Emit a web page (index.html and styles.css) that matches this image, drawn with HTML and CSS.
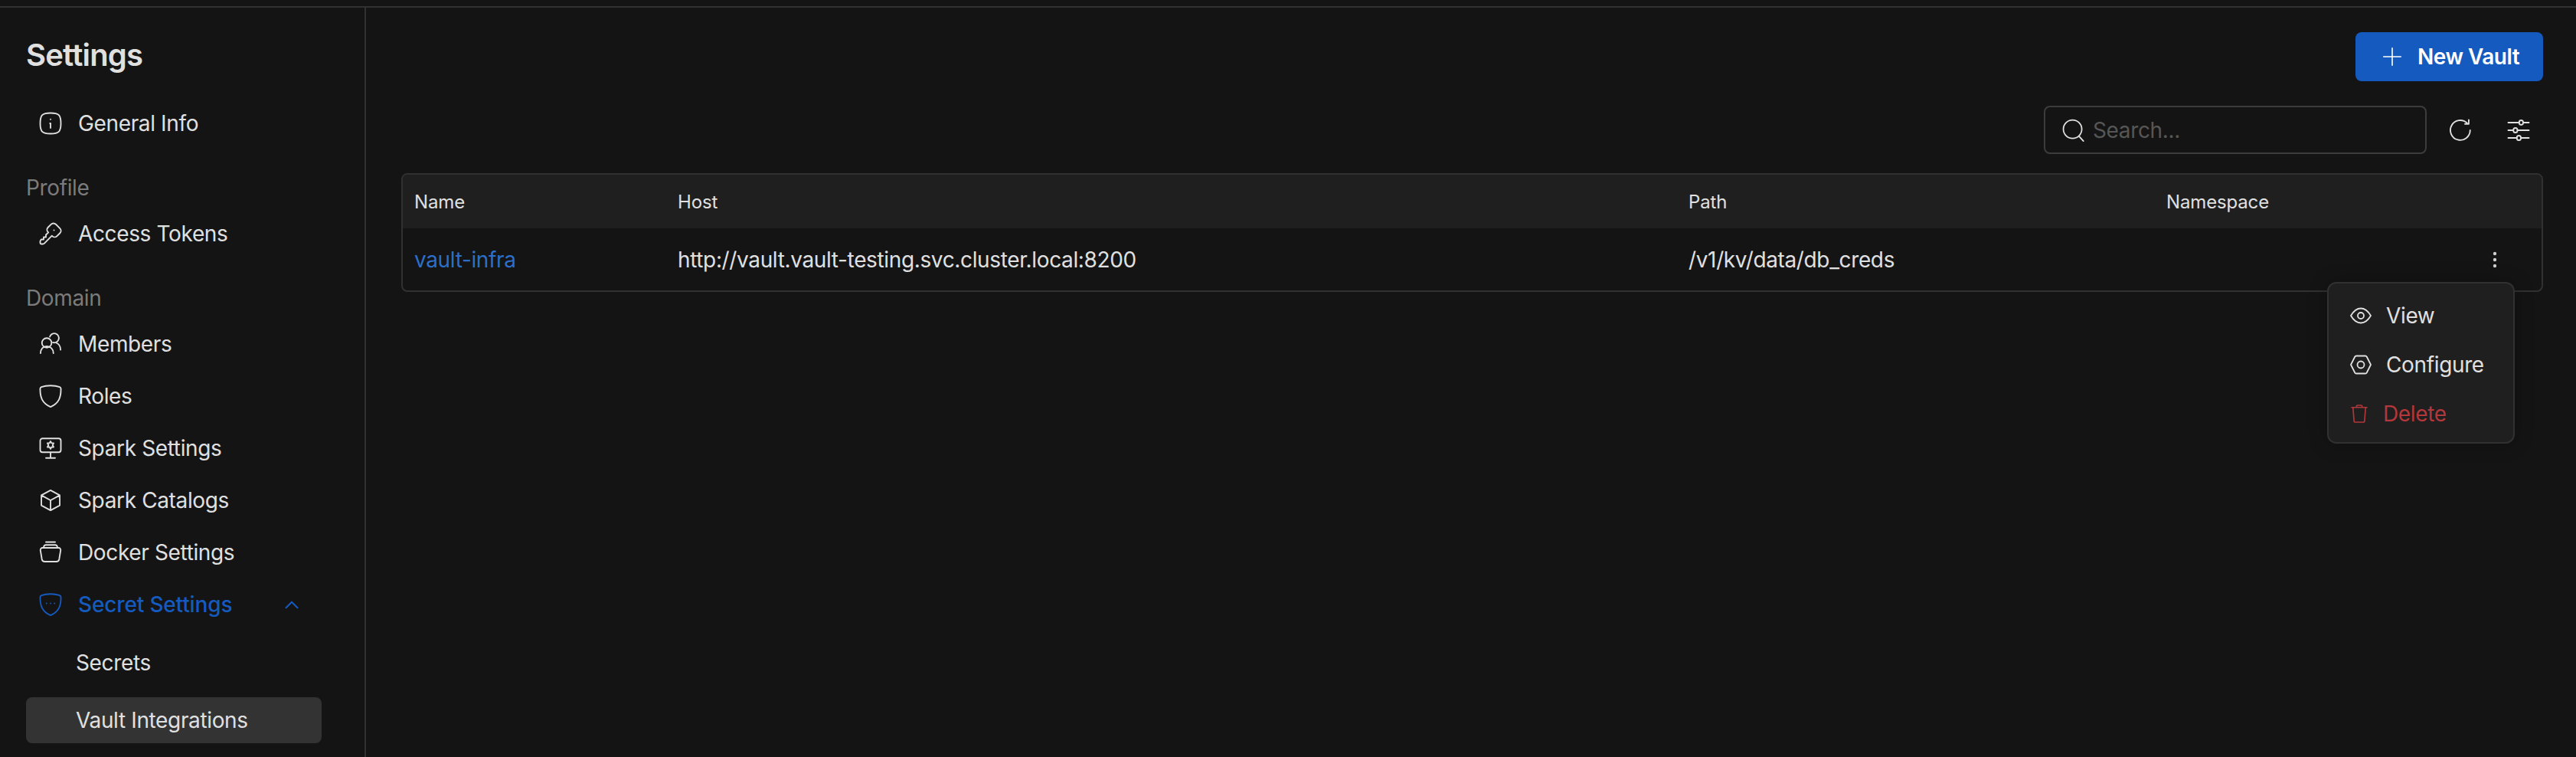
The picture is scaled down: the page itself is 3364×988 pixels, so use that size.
FILE: index.html
```html
<!DOCTYPE html>
<html lang="en">
<head>
    <meta charset="UTF-8">
    <title>Vault Integrations</title>
    <link rel="stylesheet" href="styles.css">
</head>
<body>
<div class="topbar"></div>
<div class="layout">
    <aside class="sidebar">
        <h1 class="title">Settings</h1>

        <a class="nav-item first">
            <svg class="icon" viewBox="0 0 24 24"><path d="M12 8.5h.01M11.500 12h.5v4M12 3c7.2 0 9 1.800 9 9s-1.800 9-9 9-9-1.800-9-9 1.800-9 9-9z"/></svg>
            General Info
        </a>

        <div class="nav-label">Profile</div>
        <a class="nav-item">
            <svg class="icon" viewBox="0 0 24 24"><path d="M16.600 3.800l3.600 3.600a2.900 2.900 0 0 1 0 4.100l-2.600 2.600a2.900 2.900 0 0 1-4.100 0l-.3-.3-6.600 6.600a2 2 0 0 1-1.400.6H4a1 1 0 0 1-1-1v-1.200a2 2 0 0 1 .6-1.400l.4-.4h2v-2h2v-2l2.100-2.100-.3-.3a2.900 2.900 0 0 1 0-4.100l2.600-2.600a2.900 2.900 0 0 1 4.200 0zM15 9h.01"/></svg>
            Access Tokens
        </a>

        <div class="nav-label">Domain</div>
        <a class="nav-item">
            <svg class="icon" viewBox="0 0 24 24"><circle cx="8.700" cy="11" r="4.200"/><path d="M3.300 20c0-3.700 2.300-6 5.400-6s5.800 2.300 5.800 6"/><path d="M11.400 5.700a4 4 0 1 1 2.600 4.900M17 11c2.300.9 3.700 3 3.700 6"/></svg>
            Members
        </a>
        <a class="nav-item">
            <svg class="icon" viewBox="0 0 24 24"><path d="M12 2.800c3 0 5.800.4 8 1.300.7.300 1 .8 1 1.500.2 7-1.500 12.500-9 15.800C4.500 18.100 2.800 12.600 3 5.600c0-.7.300-1.200 1-1.500 2.200-.9 5-1.300 8-1.300z"/></svg>
            Roles
        </a>
        <a class="nav-item">
            <svg class="icon" viewBox="0 0 24 24"><path d="M5 3.500h14a2 2 0 0 1 2 2v8a2 2 0 0 1-2 2H5a2 2 0 0 1-2-2v-8a2 2 0 0 1 2-2zM12 15.500v5M8 20.500h8"/><path d="M12 6l.9 1.600h1.800l-.9 1.700.9 1.700h-1.800l-.9 1.600-.9-1.600H9.300l.9-1.700-.9-1.700h1.800z"/></svg>
            Spark Settings
        </a>
        <a class="nav-item">
            <svg class="icon" viewBox="0 0 24 24"><path d="M12 3.300l8 4.300v8.800l-8 4.300-8-4.300V7.600zM12 12l8-4.400M12 12v8.700M12 12L4 7.600"/></svg>
            Spark Catalogs
        </a>
        <a class="nav-item">
            <svg class="icon" viewBox="0 0 24 24"><path d="M8 3h8M6 8c0-1.500.5-2.500 2-2.500h8c1.500 0 2 1 2 2.500"/><path d="M5 8h14c1.200 0 2 1 1.800 2.200l-1.300 7.800a2.500 2.500 0 0 1-2.500 2H7a2.500 2.500 0 0 1-2.500-2L3.200 10.200C3 9 3.800 8 5 8z"/></svg>
            Docker Settings
        </a>
        <a class="nav-item active">
            <svg class="icon" viewBox="0 0 24 24"><path d="M12 2.800c3 0 5.800.4 8 1.300.7.300 1 .8 1 1.500.2 7-1.500 12.500-9 15.800C4.500 18.100 2.800 12.600 3 5.600c0-.7.300-1.200 1-1.500 2.200-.9 5-1.300 8-1.300zM8.500 11h.01M12 11h.01M15.500 11h.01"/></svg>
            Secret Settings
            <svg class="chevron" viewBox="0 0 24 24"><path d="M3 17l9-9 9 9"/></svg>
        </a>
        <a class="sub-item first-sub">Secrets</a>
        <a class="sub-item selected">Vault Integrations</a>
    </aside>

    <main class="content">
        <div class="header">
            <button class="button" type="button">
                <svg class="icon" viewBox="0 0 24 24"><path d="M12 3v18M3 12h18"/></svg>
                New Vault
            </button>
        </div>

        <div class="toolbar">
            <div class="search">
                <svg class="icon" viewBox="0 0 24 24"><circle cx="11" cy="11" r="8.500"/><path d="M17 17.500l4 4.500"/></svg>
                <span class="placeholder">Search...</span>
            </div>
            <svg class="icon tool-refresh" viewBox="0 0 24 24"><path d="M20.500 12A8.600 8.600 0 1 1 17.800 5.700M19.300 3v3.500H16"/></svg>
            <svg class="icon tool-filter" viewBox="0 0 24 24"><path d="M3 5.300h9.500M16 5.300h5M3 12h4.500M11 12h10M3 18.700h7.500M14 18.700h7"/><rect x="12.500" y="3.300" width="3.500" height="4" rx="1.750"/><rect x="7.500" y="10" width="3.500" height="4" rx="1.750"/><rect x="10.500" y="16.700" width="3.500" height="4" rx="1.750"/></svg>
        </div>

        <div class="table">
            <div class="row head">
                <div>Name</div>
                <div>Host</div>
                <div>Path</div>
                <div>Namespace</div>
                <div></div>
            </div>
            <div class="row body">
                <div class="link">vault-infra</div>
                <div>http://vault.vault-testing.svc.cluster.local:8200</div>
                <div>/v1/kv/data/db_creds</div>
                <div></div>
                <div class="actions">
                    <svg class="kebab" viewBox="0 0 6 22"><circle cx="3" cy="3" r="2.200"/><circle cx="3" cy="11" r="2.200"/><circle cx="3" cy="19" r="2.200"/></svg>
                </div>
            </div>
        </div>

        <div class="menu">
            <div class="menu-item">
                <svg class="menu-icon" viewBox="0 0 28 28"><circle cx="14" cy="14" r="4"/><path d="M1 14C4.500 8 9 4.500 14 4.500S23.500 8 27 14c-3.500 6-8 9.500-13 9.500S4.500 20 1 14z"/></svg>
                View
            </div>
            <div class="menu-item">
                <svg class="menu-icon" viewBox="0 0 28 28"><circle cx="14" cy="14" r="4.500"/><path d="M8 2.500h12a2 2 0 0 1 1.700 1L27 14l-5.300 10.500a2 2 0 0 1-1.700 1H8a2 2 0 0 1-1.700-1L1 14 6.300 3.500a2 2 0 0 1 1.700-1z"/></svg>
                Configure
            </div>
            <div class="menu-item danger">
                <svg class="menu-icon" viewBox="0 0 24 28"><path d="M1 5h22M3 5l1.500 19a2 2 0 0 0 2 2h11a2 2 0 0 0 2-2L21 5M8 5V3.500A1.500 1.500 0 0 1 9.500 2h5A1.500 1.500 0 0 1 16 3.500V5"/></svg>
                Delete
            </div>
        </div>
    </main>
</div>
</body>
</html>
```

FILE: styles.css
```css
:root {
    --background-color: #141414;
    --border-color: #313131;
    --panel-color: #1f1f1f;
    --text-color: #e0e0e0;
    --muted-color: #7b7b7b;
    --primary-color: #155abe;
    --link-color: #2b6fcb;
    --danger-color: #b3373b;
}

* {
    box-sizing: border-box;
}

html,
body {
    height: 100%;
}

body {
    font-family: Inter, "Liberation Sans", sans-serif;
    font-size: 28px;
    letter-spacing: -0.36px;
    background-color: var(--background-color);
    color: var(--text-color);
    margin: 0;
    overflow: hidden;
}

.topbar {
    height: 10px;
    border-bottom: 2px solid var(--border-color);
}

.layout {
    display: flex;
    height: 978px;
}

.sidebar {
    width: 478px;
    flex: none;
    border-right: 2px solid var(--border-color);
    padding: 34px 56px 0 34px;
}

.title {
    font-size: 40px;
    font-weight: 600;
    letter-spacing: -0.8px;
    line-height: 56px;
    margin: 0;
}

.nav-label {
    color: var(--muted-color);
    line-height: 40px;
    margin-top: 30px;
}

.nav-item {
    display: flex;
    align-items: center;
    height: 68px;
    padding-left: 14px;
    gap: 18px;
}

.nav-item.first {
    margin-top: 27px;
}

.nav-label + .nav-item {
    margin-top: 6px;
}

.icon {
    width: 36px;
    height: 36px;
    flex: none;
    fill: none;
    stroke: currentColor;
    stroke-width: 1.25;
    stroke-linecap: round;
    stroke-linejoin: round;
}

.nav-item.active {
    color: var(--primary-color);
    font-weight: 500;
    letter-spacing: -0.15px;
}

.chevron {
    width: 20px;
    height: 20px;
    margin-left: 50px;
    fill: none;
    stroke: currentColor;
    stroke-width: 2.5;
    stroke-linecap: round;
    stroke-linejoin: round;
}

.sub-item {
    display: flex;
    align-items: center;
    height: 60px;
    padding-left: 65px;
    border-radius: 8px;
    margin-top: 15px;
}

.sub-item.first-sub {
    margin-top: 12px;
}

.sub-item.selected {
    background-color: #333333;
}

.content {
    flex: 1;
    position: relative;
    padding: 32px 43px 0 46px;
}

.header {
    display: flex;
    justify-content: flex-end;
}

.button {
    display: flex;
    align-items: center;
    gap: 18px;
    width: 245px;
    height: 64px;
    padding: 0 0 0 33px;
    background-color: var(--primary-color);
    color: white;
    border: none;
    border-radius: 8px;
    font-family: inherit;
    font-size: 28px;
    font-weight: 600;
    letter-spacing: -0.5px;
}

.button .icon {
    width: 30px;
    height: 30px;
    stroke-width: 1.3;
}

.toolbar {
    display: flex;
    justify-content: flex-end;
    align-items: center;
    margin-top: 32px;
}

.search {
    display: flex;
    align-items: center;
    gap: 8px;
    width: 500px;
    height: 63px;
    padding-left: 20px;
    border: 2px solid #3c3c3c;
    border-radius: 8px;
}

.search .icon {
    width: 34px;
    height: 34px;
}

.placeholder {
    color: #565656;
}

.tool-refresh {
    margin-left: 26px;
}

.tool-filter {
    margin-left: 40px;
    margin-right: 14px;
}

.table {
    margin-top: 25px;
    border: 2px solid var(--border-color);
    border-radius: 8px;
    overflow: hidden;
}

.row {
    display: grid;
    grid-template-columns: 344px 1320px 624px 1fr 122px;
    align-items: center;
    padding-left: 15px;
}

.row.head {
    height: 70px;
    background-color: var(--panel-color);
    font-size: 24px;
    letter-spacing: -0.15px;
}

.row.body {
    height: 81px;
}

.link {
    color: var(--link-color);
}

.actions {
    display: flex;
    justify-content: center;
}

.kebab {
    width: 6px;
    height: 22px;
    fill: #cfcfcf;
}

.menu {
    position: absolute;
    top: 358px;
    left: 2561px;
    width: 245px;
    height: 211px;
    padding: 10px 0 0 28px;
    background-color: var(--panel-color);
    border: 2px solid var(--border-color);
    border-radius: 12px;
    box-shadow: 0 0 24px rgba(0, 0, 0, 0.25);
}

.menu-item {
    display: flex;
    align-items: center;
    gap: 19px;
    height: 64px;
}

.menu-icon {
    width: 28px;
    height: 28px;
    flex: none;
    fill: none;
    stroke: currentColor;
    stroke-width: 1.8;
    stroke-linecap: round;
    stroke-linejoin: round;
}

.menu-item.danger {
    color: var(--danger-color);
    gap: 20px;
}

.menu-item.danger .menu-icon {
    width: 22px;
    margin-left: 1px;
}
```
